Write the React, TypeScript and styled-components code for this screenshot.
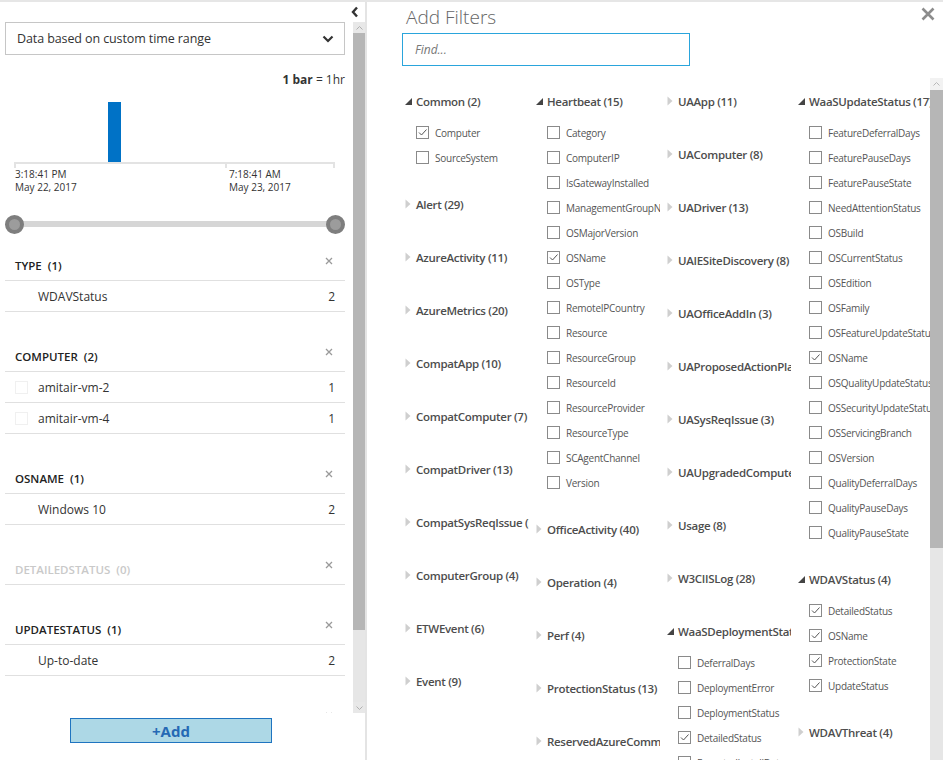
import React from 'react';
import styled, { createGlobalStyle } from 'styled-components';

const GlobalStyle = createGlobalStyle`
  html, body {
    margin: 0;
    padding: 0;
    background: #fff;
  }
  body {
    font-family: 'Open Sans', 'Noto Sans', sans-serif;
    color: #333;
  }
  * {
    box-sizing: border-box;
  }
`;

// Left panel data
const histogram = [0, 0, 0, 0, 0, 0, 0, 2, 0, 0, 0, 0, 0, 0, 0, 0, 0, 0, 0, 0, 0, 0, 0, 0];

const facets = [
  { name: 'TYPE', count: 1, boxes: false, rows: [{ label: 'WDAVStatus', count: 2 }] },
  {
    name: 'COMPUTER',
    count: 2,
    boxes: true,
    rows: [
      { label: 'amitair-vm-2', count: 1 },
      { label: 'amitair-vm-4', count: 1 }
    ]
  },
  { name: 'OSNAME', count: 1, boxes: false, rows: [{ label: 'Windows 10', count: 2 }] },
  { name: 'DETAILEDSTATUS', count: 0, boxes: false, rows: [] },
  { name: 'UPDATESTATUS', count: 1, boxes: false, rows: [{ label: 'Up-to-date', count: 2 }] },
  { name: 'PROTECTIONSTATE', count: 1, boxes: false, rows: [{ label: 'Protected', count: 2 }] }
];

// Right panel data
type Group = { name: string; items?: [string, boolean][] };

const columns: Group[][] = [
  [
    { name: 'Common (2)', items: [['Computer', true], ['SourceSystem', false]] },
    { name: 'Alert (29)' },
    { name: 'AzureActivity (11)' },
    { name: 'AzureMetrics (20)' },
    { name: 'CompatApp (10)' },
    { name: 'CompatComputer (7)' },
    { name: 'CompatDriver (13)' },
    { name: 'CompatSysReqIssue (5)' },
    { name: 'ComputerGroup (4)' },
    { name: 'ETWEvent (6)' },
    { name: 'Event (9)' }
  ],
  [
    {
      name: 'Heartbeat (15)',
      items: [
        ['Category', false],
        ['ComputerIP', false],
        ['IsGatewayInstalled', false],
        ['ManagementGroupName', false],
        ['OSMajorVersion', false],
        ['OSName', true],
        ['OSType', false],
        ['RemoteIPCountry', false],
        ['Resource', false],
        ['ResourceGroup', false],
        ['ResourceId', false],
        ['ResourceProvider', false],
        ['ResourceType', false],
        ['SCAgentChannel', false],
        ['Version', false]
      ]
    },
    { name: 'OfficeActivity (40)' },
    { name: 'Operation (4)' },
    { name: 'Perf (4)' },
    { name: 'ProtectionStatus (13)' },
    { name: 'ReservedAzureCommonFields (6)' }
  ],
  [
    { name: 'UAApp (11)' },
    { name: 'UAComputer (8)' },
    { name: 'UADriver (13)' },
    { name: 'UAIESiteDiscovery (8)' },
    { name: 'UAOfficeAddIn (3)' },
    { name: 'UAProposedActionPlan (9)' },
    { name: 'UASysReqIssue (3)' },
    { name: 'UAUpgradedComputer (12)' },
    { name: 'Usage (8)' },
    { name: 'W3CIISLog (28)' },
    {
      name: 'WaaSDeploymentStatus (14)',
      items: [
        ['DeferralDays', false],
        ['DeploymentError', false],
        ['DeploymentStatus', false],
        ['DetailedStatus', true],
        ['ExpectedInstallDate', false]
      ]
    }
  ],
  [
    {
      name: 'WaaSUpdateStatus (17)',
      items: [
        ['FeatureDeferralDays', false],
        ['FeaturePauseDays', false],
        ['FeaturePauseState', false],
        ['NeedAttentionStatus', false],
        ['OSBuild', false],
        ['OSCurrentStatus', false],
        ['OSEdition', false],
        ['OSFamily', false],
        ['OSFeatureUpdateStatus', false],
        ['OSName', true],
        ['OSQualityUpdateStatus', false],
        ['OSSecurityUpdateStatus', false],
        ['OSServicingBranch', false],
        ['OSVersion', false],
        ['QualityDeferralDays', false],
        ['QualityPauseDays', false],
        ['QualityPauseState', false]
      ]
    },
    {
      name: 'WDAVStatus (4)',
      items: [
        ['DetailedStatus', true],
        ['OSName', true],
        ['ProtectionState', true],
        ['UpdateStatus', true]
      ]
    },
    { name: 'WDAVThreat (4)' }
  ]
];

const maxBar = Math.max(...histogram);

const App = () => {
  return (
    <>
      <GlobalStyle />
      <Page>
        <LeftPanel>
          <TopBar>
            <svg width="8" height="12" viewBox="0 0 8 12">
              <path d="M6 1.5 L2 6 L6 10.5" fill="none" stroke="#333" strokeWidth="2.4" />
            </svg>
          </TopBar>

          <ScrollRow>
            <LeftScroll>
              <Dropdown>
                <span>Data based on custom time range</span>
                <svg width="12" height="8" viewBox="0 0 12 8">
                  <path d="M1.5 1.5 L6 6 L10.5 1.5" fill="none" stroke="#333" strokeWidth="2.2" />
                </svg>
              </Dropdown>

              <BarScale>
                <b>1 bar</b> = 1hr
              </BarScale>

              <Chart>
                <Bars>
                  {histogram.map((v, i) => (
                    <Bar key={i} style={{ height: `${(v / maxBar) * 100}%` }} />
                  ))}
                </Bars>
                <Axis>
                  <Tick />
                </Axis>
                <AxisLabels>
                  <AxisLabel $col={1}>
                    3:18:41 PM
                    <br />
                    May 22, 2017
                  </AxisLabel>
                  <AxisLabel $col={17}>
                    7:18:41 AM
                    <br />
                    May 23, 2017
                  </AxisLabel>
                </AxisLabels>
              </Chart>

              <Slider>
                <Thumb />
                <Track />
                <Thumb />
              </Slider>

              <FacetList>
                {facets.map((facet) => (
                  <FacetSection key={facet.name}>
                    <FacetHeader>
                      <FacetTitle $muted={facet.count === 0}>
                        {facet.name}
                        <FacetCount>({facet.count})</FacetCount>
                      </FacetTitle>
                      <FacetClose width="8" height="8" viewBox="0 0 8 8">
                        <path d="M1 1 L7 7 M7 1 L1 7" stroke="#9a9a9a" strokeWidth="1.3" />
                      </FacetClose>
                    </FacetHeader>
                    {facet.rows.map((row) => (
                      <FacetRow key={row.label}>
                        <FaintBox $visible={facet.boxes} />
                        <RowLabel>{row.label}</RowLabel>
                        <RowCount>{row.count}</RowCount>
                      </FacetRow>
                    ))}
                  </FacetSection>
                ))}
              </FacetList>
            </LeftScroll>

            <ScrollBar $width={12}>
              <ScrollArrow $height={11}>
                <svg width="7" height="4" viewBox="0 0 7 4">
                  <path d="M0.5 3.5 L3.5 0.5 L6.5 3.5" fill="none" stroke="#b0b0b0" strokeWidth="1" />
                </svg>
              </ScrollArrow>
              <ScrollThumb $height={597} />
              <ScrollRest />
              <ScrollArrow $height={11}>
                <svg width="7" height="4" viewBox="0 0 7 4">
                  <path d="M0.5 0.5 L3.5 3.5 L6.5 0.5" fill="none" stroke="#b0b0b0" strokeWidth="1" />
                </svg>
              </ScrollArrow>
            </ScrollBar>
          </ScrollRow>

          <Footer>
            <AddButton>+Add</AddButton>
          </Footer>
        </LeftPanel>

        <RightPanel>
          <TitleRow>
            <Title>Add Filters</Title>
            <svg width="14" height="14" viewBox="0 0 14 14">
              <path d="M1.5 1.5 L12.5 12.5 M12.5 1.5 L1.5 12.5" stroke="#8c8c8c" strokeWidth="2.6" />
            </svg>
          </TitleRow>

          <FindRow>
            <FindInput placeholder="Find..." />
          </FindRow>

          <FilterBody>
            <FilterScroll>
              <FilterGrid>
                {columns.map((col, ci) => (
                  <FilterColumn key={ci}>
                    {col.map((group) => (
                      <FilterGroup key={group.name}>
                        <GroupHeader>
                          <Caret>
                            {group.items ? (
                              <svg width="7" height="7" viewBox="0 0 7 7">
                                <polygon points="7,0 7,7 0,7" fill="#444" />
                              </svg>
                            ) : (
                              <svg width="6" height="10" viewBox="0 0 6 10">
                                <polygon points="0.5,0.5 5.5,5 0.5,9.5" fill="#cfcfcf" />
                              </svg>
                            )}
                          </Caret>
                          <GroupName>{group.name}</GroupName>
                        </GroupHeader>
                        <ItemList>
                          {group.items?.map(([label, checked]) => (
                            <Item key={label}>
                              <CheckBox>
                                {checked && (
                                  <svg width="11" height="11" viewBox="0 0 11 11">
                                    <polyline
                                      points="2,5.5 4.5,8 9.5,2.5"
                                      fill="none"
                                      stroke="#555"
                                      strokeWidth="1"
                                    />
                                  </svg>
                                )}
                              </CheckBox>
                              <ItemLabel>{label}</ItemLabel>
                            </Item>
                          ))}
                        </ItemList>
                      </FilterGroup>
                    ))}
                  </FilterColumn>
                ))}
              </FilterGrid>
            </FilterScroll>

            <ScrollBar $width={13}>
              <ScrollArrow $height={12} $light>
                <svg width="7" height="4" viewBox="0 0 7 4">
                  <path d="M0.5 3.5 L3.5 0.5 L6.5 3.5" fill="none" stroke="#b8b8b8" strokeWidth="1" />
                </svg>
              </ScrollArrow>
              <ScrollThumb $height={458} />
              <ScrollRest />
            </ScrollBar>
          </FilterBody>
        </RightPanel>
      </Page>
    </>
  );
};

// Page shell

const Page = styled.div`
  width: 943px;
  height: 760px;
  display: flex;
  border-top: 2px solid #e6e6e6;
  overflow: hidden;
`;

// Left panel

const LeftPanel = styled.aside`
  width: 367px;
  flex-shrink: 0;
  display: flex;
  flex-direction: column;
  border-right: 2px solid #e4e4e4;
`;

const TopBar = styled.div`
  height: 20px;
  display: flex;
  align-items: center;
  justify-content: flex-end;
  padding-right: 6px;
`;

const ScrollRow = styled.div`
  height: 691px;
  display: flex;
`;

const LeftScroll = styled.div`
  flex: 1;
  overflow: hidden;
  padding: 0 8px 0 5px;
`;

const Dropdown = styled.div`
  height: 33px;
  border: 1px solid #c6c6c6;
  display: flex;
  align-items: center;
  justify-content: space-between;
  padding: 0 10px 0 11px;
  font-size: 12.5px;
  letter-spacing: -0.1px;
  color: #333;
`;

const BarScale = styled.div`
  margin-top: 17px;
  line-height: 16px;
  font-size: 12px;
  text-align: right;
  color: #333;

  & b {
    font-weight: 700;
  }
`;

const Chart = styled.div`
  padding: 0 10px 0 9px;
`;

const Bars = styled.div`
  margin-top: 14px;
  height: 60px;
  display: grid;
  grid-template-columns: repeat(24, 1fr);
  align-items: end;
`;

const Bar = styled.div`
  background: #0072c6;
`;

const Axis = styled.div`
  height: 6px;
  border: 2px solid #e3e3e3;
  border-bottom: none;
  display: grid;
  grid-template-columns: repeat(24, 1fr);
`;

const Tick = styled.div`
  grid-column: 17;
  border-left: 2px solid #e3e3e3;
  margin-left: -2px;
`;

const AxisLabels = styled.div`
  display: grid;
  grid-template-columns: repeat(24, 1fr);
`;

const AxisLabel = styled.div<{ $col: number }>`
  grid-column: ${({ $col }) => `${$col} / span 8`};
  grid-row: 1;
  font-size: 10px;
  line-height: 13px;
  color: #333;
  white-space: nowrap;
  padding-left: 1px;
`;

const Slider = styled.div`
  margin-top: 20px;
  height: 20px;
  display: flex;
  align-items: center;
`;

const Thumb = styled.div`
  width: 19px;
  height: 19px;
  border-radius: 50%;
  background: #9c9c9c;
  border: 4px solid #7e7e7e;
  flex-shrink: 0;
  position: relative;
  z-index: 1;
`;

const Track = styled.div`
  flex: 1;
  height: 6px;
  background: #d6d6d6;
  margin: 0 -2px;
`;

const FacetList = styled.div`
  margin-top: 16px;
`;

const FacetSection = styled.section`
  margin-bottom: 29px;
`;

const FacetHeader = styled.div`
  height: 31px;
  display: flex;
  align-items: center;
  justify-content: space-between;
  padding: 0 12px 0 10px;
  border-bottom: 1px solid #e0e0e0;
`;

const FacetTitle = styled.div<{ $muted: boolean }>`
  font-size: 11.5px;
  font-weight: 600;
  color: ${({ $muted }) => ($muted ? '#c9c9c9' : '#222')};
`;

const FacetCount = styled.span`
  margin-left: 6px;
`;

const FacetClose = styled.svg`
  align-self: flex-start;
  margin-top: 7px;
`;

const FacetRow = styled.div`
  height: 31px;
  display: flex;
  align-items: center;
  gap: 10px;
  padding: 0 10px;
  border-bottom: 1px solid #e0e0e0;
  font-size: 12px;
  color: #333;
`;

const FaintBox = styled.div<{ $visible: boolean }>`
  width: 13px;
  height: 13px;
  border: 1px solid ${({ $visible }) => ($visible ? '#f0f0f0' : 'transparent')};
`;

const RowLabel = styled.span`
  flex: 1;
`;

const RowCount = styled.span``;

const Footer = styled.div`
  flex: 1;
  padding: 5px 0 0 70px;
`;

const AddButton = styled.button`
  width: 202px;
  height: 25px;
  background: #add8e6;
  border: 1px solid #1f74c0;
  color: #2569b4;
  font-family: 'Open Sans', 'Noto Sans', sans-serif;
  font-size: 15px;
  line-height: 20px;
  font-weight: 700;
  padding: 0;
  cursor: pointer;
`;

// Shared scroll bar

const ScrollBar = styled.div<{ $width: number }>`
  width: ${({ $width }) => $width}px;
  flex-shrink: 0;
  display: flex;
  flex-direction: column;
  background: #e6e6e6;
`;

const ScrollArrow = styled.div<{ $height: number; $light?: boolean }>`
  height: ${({ $height }) => $height}px;
  display: flex;
  align-items: center;
  justify-content: center;
  background: ${({ $light }) => ($light ? '#f2f2f2' : '#e8e8e8')};
`;

const ScrollThumb = styled.div<{ $height: number }>`
  height: ${({ $height }) => $height}px;
  background: #b6b6b6;
`;

const ScrollRest = styled.div`
  flex: 1;
`;

// Right panel

const RightPanel = styled.section`
  flex: 1;
  display: flex;
  flex-direction: column;
  min-width: 0;
`;

const TitleRow = styled.div`
  height: 31px;
  display: flex;
  align-items: flex-start;
  justify-content: space-between;
  padding: 0 8px 0 39px;

  & svg {
    margin-top: 5px;
  }
`;

const Title = styled.h1`
  margin: 2px 0 0;
  font-size: 19px;
  line-height: 26px;
  font-weight: 300;
  color: #666;
`;

const FindRow = styled.div`
  padding-left: 35px;
`;

const FindInput = styled.input`
  width: 288px;
  height: 33px;
  border: 1px solid #2aa5dc;
  padding: 0 12px;
  font-family: 'Open Sans', 'Noto Sans', sans-serif;
  font-size: 12px;
  outline: none;

  &::placeholder {
    font-style: italic;
    color: #777;
  }
`;

const FilterBody = styled.div`
  margin-top: 12px;
  flex: 1;
  min-height: 0;
  display: flex;
`;

const FilterScroll = styled.div`
  flex: 1;
  overflow: hidden;
  padding: 8px 0 0 36px;
`;

const FilterGrid = styled.div`
  display: grid;
  grid-template-columns: 126px 126px 126px 1fr;
  column-gap: 5px;
  align-items: start;
`;

const FilterColumn = styled.div`
  min-width: 0;
  overflow: hidden;
`;

const FilterGroup = styled.div`
  margin-bottom: 19px;
`;

const GroupHeader = styled.div`
  height: 30px;
  display: flex;
  align-items: center;
`;

const Caret = styled.div`
  width: 13px;
  flex-shrink: 0;
  padding-left: 2px;
  display: flex;
  align-items: center;
`;

const GroupName = styled.span`
  font-size: 11.5px;
  letter-spacing: -0.3px;
  font-weight: 600;
  color: #4d4d4d;
  white-space: nowrap;
`;

const ItemList = styled.div`
  padding: 4px 0 0 13px;
`;

const Item = styled.div`
  height: 25px;
  display: flex;
  align-items: center;
  gap: 6px;
`;

const CheckBox = styled.div`
  width: 13px;
  height: 13px;
  flex-shrink: 0;
  border: 1px solid #8a8a8a;
  display: flex;
  align-items: center;
  justify-content: center;
`;

const ItemLabel = styled.span`
  font-size: 10px;
  letter-spacing: -0.25px;
  color: #555;
  white-space: nowrap;
`;

export default App;
